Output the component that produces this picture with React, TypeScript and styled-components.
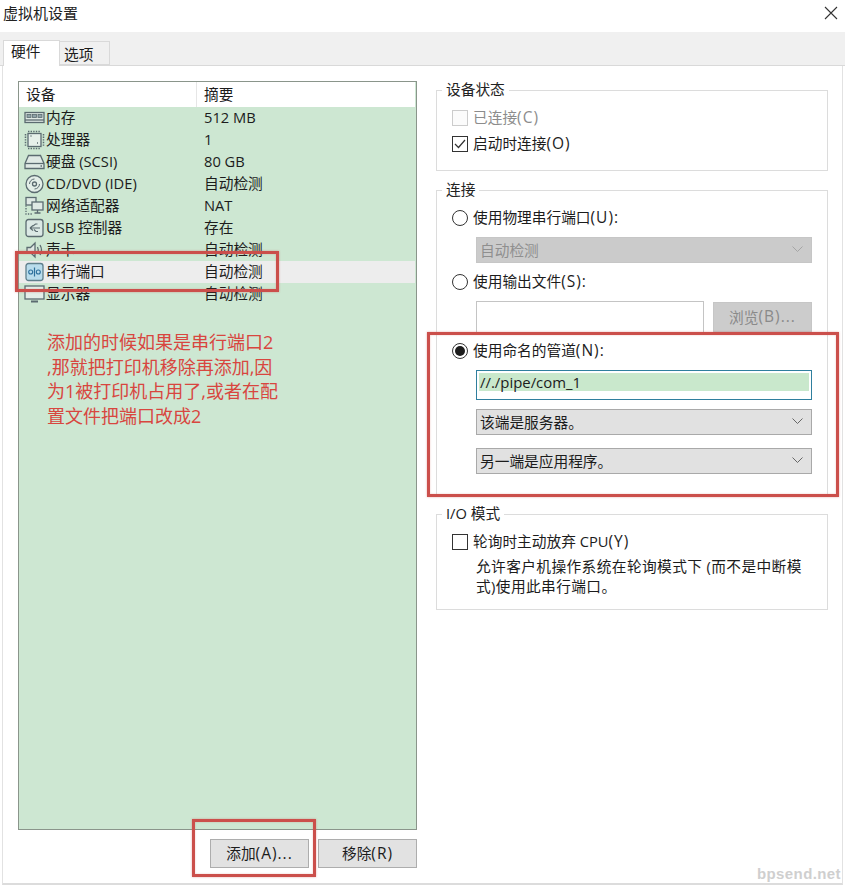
import React from "react";
import styled, { createGlobalStyle } from "styled-components";

const Global = createGlobalStyle`
  html, body { margin: 0; padding: 0; background: #fff; }
  * { box-sizing: border-box; }
  body {
    font-family: "Open Sans", "Noto Sans CJK SC", "Noto Sans", sans-serif;
    font-size: 14.7px;
    color: #1c1c1c;
  }
`;

const Window = styled.div`
  position: relative;
  width: 845px;
  height: 885px;
  overflow: hidden;
  display: flex;
  flex-direction: column;
  background: #fff;
`;
const TitleBar = styled.div`
  height: 32px;
  flex: none;
  display: flex;
  align-items: center;
  justify-content: space-between;
  padding: 0 7px 7px 3px;
  font-size: 15px;
  color: #222;
`;
const TabStrip = styled.div`
  height: 34px;
  flex: none;
  display: flex;
  align-items: flex-end;
  padding-left: 3px;
  background: #f0f0f0;
  border-bottom: 1px solid #d9d9d9;
`;
const Tab = styled.div<{ $active?: boolean }>`
  height: ${(p) => (p.$active ? 26 : 24)}px;
  width: ${(p) => (p.$active ? 57 : 50)}px;
  margin-bottom: ${(p) => (p.$active ? -1 : 0)}px;
  padding-left: ${(p) => (p.$active ? 7 : 4)}px;
  line-height: ${(p) => (p.$active ? 21 : 24)}px;
  background: ${(p) => (p.$active ? "#fff" : "#f0f0f0")};
  border: 1px solid #d9d9d9;
  border-bottom: ${(p) => (p.$active ? "none" : "1px solid #d9d9d9")};
  border-left: ${(p) => (p.$active ? "1px solid #d9d9d9" : "none")};
`;
const Page = styled.div`
  flex: 1;
  display: flex;
  margin: 0 2px 0 2px;
  padding: 14px 0 0 15px;
  border-left: 1px solid #e2e2e2;
  border-right: 1px solid #e2e2e2;
  border-bottom: 2px solid #dcdcdc;
`;
const LeftColumn = styled.div`
  width: 399px;
  flex: none;
  display: flex;
  flex-direction: column;
`;
const DeviceList = styled.div`
  height: 749px;
  margin-top: 1px;
  border: 1px solid #8a958b;
  background: #cde7d2;
  display: flex;
  flex-direction: column;
`;
const ListHeader = styled.div`
  height: 25px;
  flex: none;
  display: flex;
  background: #fff;
  line-height: 25px;
  margin-right: 1px;
`;
const HeaderCell = styled.div<{ $first?: boolean }>`
  width: ${(p) => (p.$first ? "178px" : "auto")};
  padding-left: 7px;
  border-right: ${(p) => (p.$first ? "1px solid #e6e6e6" : "none")};
`;
const Row = styled.div<{ $selected?: boolean }>`
  height: 22px;
  flex: none;
  display: flex;
  align-items: center;
  background: ${(p) => (p.$selected ? "#ededed" : "transparent")};
  margin-right: 1px;
`;
const NameCell = styled.div`
  width: 185px;
  flex: none;
  display: flex;
  align-items: center;
  gap: 1px;
  padding-left: 5px;
  white-space: nowrap;
`;
const IconBox = styled.span`
  width: 21px;
  height: 20px;
  flex: none;
  display: inline-flex;
`;
const Label = styled.span`
  padding-bottom: 3px;
  white-space: nowrap;
`;
const Hotkey = styled.span`
  font-size: 15.5px;
  letter-spacing: 1px;
`;
const Note = styled.div`
  margin: 25px 0 0 28px;
  font-size: 18px;
  line-height: 24.7px;
  color: #d8463f;
  white-space: nowrap;
`;
const ButtonRow = styled.div`
  margin-top: 9px;
  display: flex;
  justify-content: flex-end;
  gap: 9px;
`;
const PushButton = styled.div<{ $w: number }>`
  width: ${(p) => p.$w}px;
  height: 29px;
  display: flex;
  align-items: center;
  justify-content: center;
  padding-bottom: 2px;
  background: #e2e2e2;
  border: 1px solid #adadad;
`;
const RightColumn = styled.div`
  width: 392px;
  flex: none;
  margin-left: 19px;
  display: flex;
  flex-direction: column;
  gap: 9px;
`;
const Group = styled.fieldset<{ $h: number }>`
  height: ${(p) => p.$h}px;
  margin: 0;
  padding: 0 15px;
  border: 1px solid #dcdcdc;
  min-width: 0;
`;
const Legend = styled.legend`
  margin-left: -10px;
  padding: 0 4px;
  line-height: 19px;
  height: 20px;
  color: #222;
`;
const OptionRow = styled.div<{ $top: number; $muted?: boolean }>`
  display: flex;
  align-items: center;
  gap: 5px;
  height: 20px;
  margin-top: ${(p) => p.$top}px;
  color: ${(p) => (p.$muted ? "#8c8c8c" : "#1c1c1c")};
  white-space: nowrap;
`;
const CheckBox = styled.span<{ $disabled?: boolean }>`
  width: 16px;
  height: 16px;
  flex: none;
  display: inline-flex;
  background: ${(p) => (p.$disabled ? "#fbfbfb" : "#fff")};
  border: 1px solid ${(p) => (p.$disabled ? "#cccccc" : "#333")};
`;
const Radio = styled.span<{ $on?: boolean }>`
  width: 16px;
  height: 16px;
  flex: none;
  border-radius: 50%;
  border: 1px solid #333;
  background: #fff;
  display: inline-flex;
  align-items: center;
  justify-content: center;
  &::after {
    content: "";
    width: 10px;
    height: 10px;
    border-radius: 50%;
    background: ${(p) => (p.$on ? "#1c1c1c" : "transparent")};
  }
`;
const Indented = styled.div<{ $top: number }>`
  margin: ${(p) => p.$top}px 0 0 24px;
  width: 336px;
  display: flex;
  justify-content: space-between;
`;
const Select = styled.div<{ $disabled?: boolean }>`
  width: 336px;
  height: 26px;
  display: flex;
  align-items: center;
  justify-content: space-between;
  padding: 0 8px 2px 3px;
  background: ${(p) => (p.$disabled ? "#cbcbcb" : "#e1e1e1")};
  border: 1px solid ${(p) => (p.$disabled ? "#c6c6c6" : "#a9a9a9")};
  color: ${(p) => (p.$disabled ? "#8f8f8f" : "#1c1c1c")};
`;
const EmptyInput = styled.div`
  width: 228px;
  height: 32px;
  background: #fff;
  border: 1px solid #c4c4c4;
`;
const BrowseButton = styled.div`
  width: 99px;
  height: 30px;
  margin-top: 1px;
  display: flex;
  align-items: center;
  justify-content: center;
  padding-bottom: 2px;
  background: #cccccc;
  border: 1px solid #c6c6c6;
  color: #8a8a8a;
`;
const PipeInput = styled.div`
  width: 336px;
  height: 30px;
  padding: 2px 2px 8px 2px;
  background: #fff;
  border: 1px solid #2f7f9e;
  display: flex;
`;
const PipeText = styled.div`
  flex: 1;
  background: #c9e8cc;
  font-size: 14.9px;
  line-height: 19px;
  padding-left: 1px;
`;
const Help = styled.div`
  margin: 4px 0 0 24px;
  line-height: 20px;
  letter-spacing: 0.4px;
  white-space: nowrap;
`;
const RedBox = styled.div<{ $x: number; $y: number; $w: number; $h: number }>`
  position: absolute;
  left: ${(p) => p.$x}px;
  top: ${(p) => p.$y}px;
  width: ${(p) => p.$w}px;
  height: ${(p) => p.$h}px;
  border: 3px solid #cb4f4b;
  box-shadow: 0 0 2px rgba(203, 79, 75, 0.45), inset 0 0 2px rgba(203, 79, 75, 0.35);
  pointer-events: none;
`;
const Watermark = styled.div`
  position: absolute;
  right: 4px;
  bottom: 3px;
  font-family: "Liberation Sans", sans-serif;
  font-weight: 700;
  font-size: 15px;
  letter-spacing: 0.4px;
  color: #cfcfcf;
`;

const ico = { stroke: "#5b6b70", fill: "none", strokeWidth: 1.3 };
const Svg = ({ children }: { children: React.ReactNode }) => (
  <svg width="21" height="20" viewBox="0 0 21 20" {...ico}>
    {children}
  </svg>
);
const icons: Record<string, React.ReactNode> = {
  memory: (
    <Svg>
      <rect x="1" y="4.5" width="19" height="10" fill="#dfe9e4" />
      <rect x="3" y="6.5" width="4" height="3" fill="#8fa3a8" strokeWidth="0.8" />
      <rect x="8.5" y="6.5" width="4" height="3" fill="#8fa3a8" strokeWidth="0.8" />
      <rect x="14" y="6.5" width="4" height="3" fill="#8fa3a8" strokeWidth="0.8" />
      <path d="M1 12h19" />
    </Svg>
  ),
  cpu: (
    <Svg>
      <rect x="4" y="3.5" width="13" height="13" fill="#e6f0ea" />
      <path d="M4 1.5h13M4 18.5h13M1.5 4v12M19.5 4v12" strokeDasharray="1.4 1.2" strokeWidth="1.5" />
      <path d="M6.5 6h1M13 13h1" strokeWidth="1.4" />
    </Svg>
  ),
  disk: (
    <Svg>
      <path d="M1 11.5 4.5 3.5h12l3.5 8v5H1z" fill="#dfe9e4" />
      <path d="M1 11.5h19" />
      <path d="M16.5 14h1.5" strokeWidth="1.5" />
    </Svg>
  ),
  cd: (
    <Svg>
      <circle cx="10.5" cy="10" r="8.5" fill="#e3eee8" />
      <circle cx="10.5" cy="10" r="2" />
      <path d="M5.5 10a5 5 0 0 1 5-5M15.5 10a5 5 0 0 1-5 5" strokeWidth="1" />
    </Svg>
  ),
  net: (
    <Svg>
      <rect x="2" y="1.5" width="10" height="7.5" fill="#dfe9e4" />
      <rect x="8" y="6" width="11" height="8" fill="#dfe9e4" />
      <path d="M13.5 14v2.5M10.5 17h6" />
      <path d="M2 9.5v8.5h7" strokeDasharray="1.3 1.3" />
    </Svg>
  ),
  usb: (
    <Svg>
      <rect x="2" y="1.5" width="17" height="17" rx="2.5" fill="#dbe9e5" />
      <path d="M16 10H6M6 10l3-2.5M6 10l3 2.5M9 8l2.5-2h2M10 11.5l2 2h2" strokeWidth="1.1" />
    </Svg>
  ),
  sound: (
    <Svg>
      <path d="M3 7.5h3.5L11 3v14l-4.5-4.5H3z" fill="#dfe9e4" />
      <path d="M13.5 7c1 1.8 1 4.2 0 6M16 5c1.8 3 1.8 7 0 10" />
    </Svg>
  ),
  serial: (
    <Svg>
      <rect x="2" y="1.5" width="17" height="17" rx="2.5" fill="#b9dcec" stroke="#5f7f8c" />
      <circle cx="6.7" cy="10" r="2" stroke="#2c6f9c" strokeWidth="1.1" />
      <circle cx="14.3" cy="10" r="2" stroke="#2c6f9c" strokeWidth="1.1" />
      <path d="M10.5 5.5v9" stroke="#2c6f9c" strokeWidth="1.2" />
    </Svg>
  ),
  monitor: (
    <Svg>
      <rect x="1" y="2" width="19" height="13" fill="#e3eee8" />
      <path d="M7 17.5h7" strokeWidth="2" />
    </Svg>
  ),
};

const rows: [string, string, string][] = [
  ["memory", "内存", "512 MB"],
  ["cpu", "处理器", "1"],
  ["disk", "硬盘 (SCSI)", "80 GB"],
  ["cd", "CD/DVD (IDE)", "自动检测"],
  ["net", "网络适配器", "NAT"],
  ["usb", "USB 控制器", "存在"],
  ["sound", "声卡", "自动检测"],
  ["serial", "串行端口", "自动检测"],
  ["monitor", "显示器", "自动检测"],
];

const Chevron = ({ color = "#666" }: { color?: string }) => (
  <svg width="11" height="6" viewBox="0 0 11 6" fill="none" stroke={color} strokeWidth="1">
    <path d="M.5.5l5 5 5-5" />
  </svg>
);
const Tick = () => (
  <svg width="14" height="14" viewBox="0 0 14 14" fill="none" stroke="#333" strokeWidth="1.2">
    <path d="M2 7l3.5 3.5L12 3" />
  </svg>
);

export default function App() {
  return (
    <Window>
      <Global />
      <TitleBar>
        <span>虚拟机设置</span>
        <svg width="14" height="14" viewBox="0 0 14 14" stroke="#333" strokeWidth="1.1" fill="none">
          <path d="M1 1l12 12M13 1 1 13" />
        </svg>
      </TitleBar>
      <TabStrip>
        <Tab $active>硬件</Tab>
        <Tab>选项</Tab>
      </TabStrip>
      <Page>
        <LeftColumn>
          <DeviceList>
            <ListHeader>
              <HeaderCell $first>设备</HeaderCell>
              <HeaderCell>摘要</HeaderCell>
            </ListHeader>
            {rows.map(([icon, name, summary]) => (
              <Row key={name} $selected={icon === "serial"}>
                <NameCell>
                  <IconBox>{icons[icon]}</IconBox>
                  <Label>{name}</Label>
                </NameCell>
                <Label>{summary}</Label>
              </Row>
            ))}
            <Note>
              添加的时候如果是串行端口2
              <br />
              ,那就把打印机移除再添加,因
              <br />
              为1被打印机占用了,或者在配
              <br />
              置文件把端口改成2
            </Note>
          </DeviceList>
          <ButtonRow>
            <PushButton $w={99}>添加<Hotkey>(A)...</Hotkey></PushButton>
            <PushButton $w={99}>移除<Hotkey>(R)</Hotkey></PushButton>
          </ButtonRow>
        </LeftColumn>
        <RightColumn>
          <Group $h={91}>
            <Legend>设备状态</Legend>
            <OptionRow $top={8} $muted>
              <CheckBox $disabled />
              <Label>已连接<Hotkey>(C)</Hotkey></Label>
            </OptionRow>
            <OptionRow $top={6}>
              <CheckBox>
                <Tick />
              </CheckBox>
              <Label>启动时连接<Hotkey>(O)</Hotkey></Label>
            </OptionRow>
          </Group>
          <Group $h={315}>
            <Legend>连接</Legend>
            <OptionRow $top={8}>
              <Radio />
              <Label>使用物理串行端口<Hotkey>(U):</Hotkey></Label>
            </OptionRow>
            <Indented $top={9}>
              <Select $disabled>
                自动检测
                <Chevron color="#a5a5a5" />
              </Select>
            </Indented>
            <OptionRow $top={9}>
              <Radio />
              <Label>使用输出文件<Hotkey>(S):</Hotkey></Label>
            </OptionRow>
            <Indented $top={9}>
              <EmptyInput />
              <BrowseButton>浏览<Hotkey>(B)...</Hotkey></BrowseButton>
            </Indented>
            <OptionRow $top={8}>
              <Radio $on />
              <Label>使用命名的管道<Hotkey>(N):</Hotkey></Label>
            </OptionRow>
            <Indented $top={9}>
              <PipeInput>
                <PipeText>//./pipe/com_1</PipeText>
              </PipeInput>
            </Indented>
            <Indented $top={9}>
              <Select>
                该端是服务器。
                <Chevron />
              </Select>
            </Indented>
            <Indented $top={13}>
              <Select>
                另一端是应用程序。
                <Chevron />
              </Select>
            </Indented>
          </Group>
          <Group $h={106}>
            <Legend>I/O 模式</Legend>
            <OptionRow $top={8}>
              <CheckBox />
              <Label>轮询时主动放弃 CPU<Hotkey>(Y)</Hotkey></Label>
            </OptionRow>
            <Help>
              允许客户机操作系统在轮询模式下 (而不是中断模
              <br />
              式)使用此串行端口。
            </Help>
          </Group>
        </RightColumn>
      </Page>
      <RedBox $x={15} $y={251} $w={264} $h={41} />
      <RedBox $x={427} $y={332} $w={412} $h={165} />
      <RedBox $x={192} $y={819} $w={124} $h={58} />
      <Watermark>bpsend.net</Watermark>
    </Window>
  );
}
